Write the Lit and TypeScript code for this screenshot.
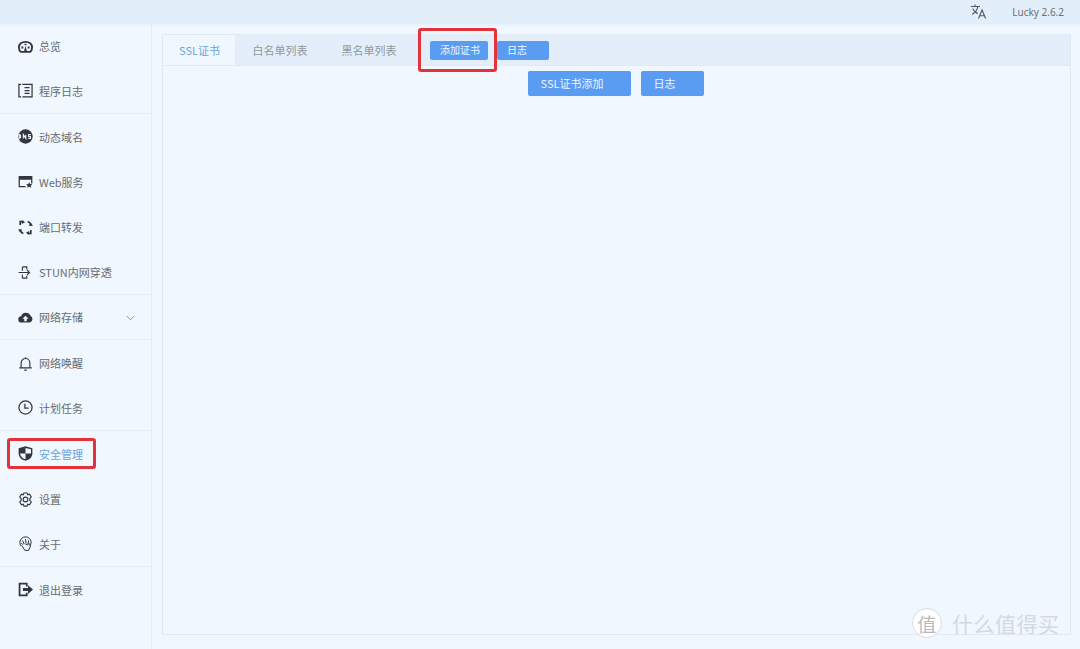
import { LitElement, html, css, svg } from 'lit';
import { customElement } from 'lit/decorators.js';

// sidebar icons, all drawn in a 24x24 box
const icons: Record<string, unknown> = {
  gauge: svg`<path fill="none" stroke="currentColor" stroke-width="3" d="M4.500 20.500h15c2-1.500 3-4 3-7 0-5.500-4.500-9-10.500-9S1.500 8 1.500 13.500c0 3 1 5.500 3 7z"/><path fill="currentColor" d="M9.500 20l2.500-9 2.500 9zM5.500 12h3v3h-3zM15.500 12h3v3h-3zM10.500 7.500h3V10h-3z"/>`,
  log: svg`<path fill="none" stroke="currentColor" stroke-width="2" d="M5 2H1.500v20H5M7 2h15.500v20H7M10.500 7.500h8M10.500 12h8M10.500 16.500h8"/>`,
  dns: svg`<circle cx="12" cy="12" r="11.500" fill="currentColor"/><path stroke="#f0f7ff" stroke-width="1.700" fill="none" d="M2 9c3 0 3 6 0 6zM8.500 15V9l4 6V9M20.500 9h-3.500v3h3v3h-3.500"/>`,
  web: svg`<path fill="currentColor" fill-rule="evenodd" d="M1 3h22v12h-2V9H3v10h9v2H1z"/><path fill="currentColor" d="M18 13l1.500 3 3.500.5-2.500 2.300.6 3.200-3.100-1.600-3.100 1.600.6-3.200-2.500-2.300 3.500-.5z"/>`,
  port: svg`<path fill="none" stroke="currentColor" stroke-width="2.600" d="M9 2.500H3.500V8M15 21.500h5.500V16M21 9c-.5-3-2-5.500-5.500-6.500M3 15c.5 3 2 5.500 5.500 6.500"/><path fill="currentColor" d="M6 .5l5.500 3-5.500 3zM18 23.500l-5.500-3 5.500-3zM0 15l3.500 4.500L7 15zM17 9l3.500-4.500L24 9z"/>`,
  stun: svg`<path fill="none" stroke="currentColor" stroke-width="1.800" d="M1 12h17M14.500 8l4 4-4 4M7 3h7v4M7 21h7v-4M7 3v6M7 15v6"/>`,
  cloud: svg`<path fill="currentColor" fill-rule="evenodd" d="M6 20a5 5 0 01-1-10 8 8 0 0115-1 6 6 0 01-1 11zm6-11l-5 5h3v4h4v-4h3z"/>`,
  bell: svg`<path fill="none" stroke="currentColor" stroke-width="1.800" d="M2 19h20M5 19v-8a7 7 0 0114 0v8M10 22.500h4M12 2v2"/>`,
  clock: svg`<circle cx="12" cy="12" r="10.500" fill="none" stroke="currentColor" stroke-width="2"/><path fill="none" stroke="currentColor" stroke-width="2" d="M11 6v7h6"/>`,
  shield: svg`<path fill="currentColor" d="M12 .5l11 3V12c0 6-5 10.500-11 11.500C6 22.500 1 18 1 12V3.500z"/><path fill="#f0f7ff" d="M12 3v9h8.800V5.200zM12 12v9.200C7.500 20 3.800 17 3.200 12z"/>`,
  gear: svg`<path fill="none" stroke="currentColor" stroke-width="1.800" d="M9.500 1.500h5l1 3 3-1 2.700 4.500-2.200 2.500v3l2.200 2.500-2.700 4.500-3-1-1 3h-5l-1-3-3 1L2.800 16 5 13.500v-3L2.800 8l2.700-4.500 3 1z"/><circle cx="12" cy="12" r="3.800" fill="none" stroke="currentColor" stroke-width="1.800"/>`,
  about: svg`<path fill="none" stroke="currentColor" stroke-width="1.600" d="M5 16a9 9 0 1114 0M8 14l-3-3M10 13L7 7M13 12l-1-7M16 13l1-6M6 15l5 8h6l3-7-2-4-3 2-3-1"/>`,
  logout: svg`<path fill="none" stroke="currentColor" stroke-width="2.800" d="M14 7V2.500H2.500v19H14V17"/><path fill="currentColor" d="M8 9.500h8V5l8 7-8 7v-4.500H8z"/>`,
};

const menu = [
  { label: '总览', icon: 'gauge' },
  { label: '程序日志', icon: 'log', divider: true },
  { label: '动态域名', icon: 'dns' },
  { label: 'Web服务', icon: 'web' },
  { label: '端口转发', icon: 'port' },
  { label: 'STUN内网穿透', icon: 'stun', divider: true },
  { label: '网络存储', icon: 'cloud', divider: true, arrow: true },
  { label: '网络唤醒', icon: 'bell' },
  { label: '计划任务', icon: 'clock', divider: true },
  { label: '安全管理', icon: 'shield', active: true },
  { label: '设置', icon: 'gear' },
  { label: '关于', icon: 'about', divider: true },
  { label: '退出登录', icon: 'logout' },
];

@customElement('app-root')
export class AppRoot extends LitElement {
  static styles = css`
    :host {
      display: block;
      position: relative;
      width: 1080px;
      height: 649px;
      overflow: hidden;
      background: #f0f7ff;
      color: #686c71;
      font-family: 'Noto Sans CJK SC', 'Noto Sans', sans-serif;
      font-size: 11px;
    }
    .top {
      height: 23px;
      display: flex;
      align-items: center;
      justify-content: flex-end;
      padding-right: 16px;
      background: #e3eefb;
      box-shadow: 0 1px 3px rgba(200, 215, 235, 0.5);
      font-family: 'Noto Sans', sans-serif;
      font-size: 10px;
      color: #6b7076;
    }
    .top svg {
      width: 17px;
      height: 17px;
      margin-right: 25px;
      color: #55595e;
    }
    .body {
      display: flex;
      height: 626px;
    }
    .side {
      width: 151px;
      flex: none;
      padding-top: 0.400px;
      border-right: 1px solid #e3ebf5;
      box-sizing: content-box;
    }
    .item {
      height: 45.300px;
      box-sizing: border-box;
      display: flex;
      align-items: center;
      padding-left: 18px;
      gap: 6px;
    }
    .item.line {
      border-bottom: 1px solid #e4ecf5;
    }
    .item svg.ic {
      width: 15px;
      height: 15px;
      color: #33373c;
      flex: none;
    }
    .item.on {
      color: #6ba3dc;
    }
    .arrow {
      width: 9px;
      height: 9px;
      margin-left: auto;
      margin-right: 16px;
      color: #777;
    }
    .main {
      flex: 1;
      padding: 11px 9px 14px 10px;
      min-width: 0;
    }
    .panel {
      height: 100%;
      box-sizing: border-box;
      border: 1px solid #e1e9f3;
      display: flex;
      flex-direction: column;
    }
    .tabs {
      height: 31px;
      flex: none;
      display: flex;
      align-items: center;
      background: #e3eefa;
      border-bottom: 1px solid #e1e9f3;
      box-sizing: border-box;
    }
    .tab {
      height: 100%;
      display: flex;
      align-items: center;
      padding-bottom: 1px;
      color: #92989f;
      margin-right: 1px;
      white-space: nowrap;
      box-sizing: border-box;
    }
    .tab.on {
      background: #f0f7ff;
      color: #69a5dc;
      width: 72px;
      padding-left: 16px;
    }
    .tab.plain {
      width: 88px;
      justify-content: center;
    }
    .btn {
      background: #5a9cf2;
      color: #eef5ff;
      border-radius: 2px;
      display: flex;
      align-items: center;
      box-sizing: border-box;
      white-space: nowrap;
      padding-bottom: 2px;
    }
    .btn.small {
      height: 19px;
      padding-left: 10px;
      font-size: 10px;
    }
    .btn.add {
      width: 58px;
    }
    .btn.log {
      width: 52px;
    }
    .tab-btns {
      display: flex;
      gap: 9px;
      margin-left: 16px;
    }
    .content {
      display: flex;
      justify-content: center;
      gap: 10px;
      padding-top: 5px;
      padding-right: 2px;
    }
    .btn.big {
      height: 25px;
      padding-left: 13px;
    }
    .btn.ssl {
      width: 103px;
    }
    .btn.logs {
      width: 63px;
    }
    .mark {
      position: absolute;
      border: 3px solid #e2333a;
      border-radius: 3px;
      box-sizing: border-box;
    }
    .mark.menu {
      left: 7px;
      top: 438px;
      width: 89px;
      height: 31px;
    }
    .mark.tools {
      left: 418px;
      top: 28px;
      width: 79px;
      height: 44px;
    }
    .watermark {
      position: absolute;
      left: 912px;
      bottom: 11px;
      display: flex;
      align-items: center;
      gap: 10px;
      color: #d4d9de;
      font-size: 21px;
      letter-spacing: 0.500px;
    }
    .wm-logo {
      width: 30px;
      height: 30px;
      border-radius: 50%;
      background: #fff;
      border: 1px solid #d9dde2;
      box-sizing: border-box;
      display: flex;
      align-items: center;
      justify-content: center;
      color: #b5b9be;
      font-size: 19px;
    }
  `;

  render() {
    return html`
      <div class="top">
        <svg viewBox="0 0 24 24" fill="none" stroke="currentColor" stroke-width="1.600">
          <path d="M1 5h13M7 2v3M11 5c-1 5-4 9-8 11M4 8c1 3 4 6 7 7" />
          <path d="M12 22l5-12 5 12M14 18h6" />
        </svg>
        Lucky 2.6.2
      </div>
      <div class="body">
        <aside class="side">
          ${menu.map(
            (m) => html`
              <div class="item ${m.divider ? 'line' : ''} ${m.active ? 'on' : ''}">
                <svg class="ic" viewBox="0 0 24 24">${icons[m.icon]}</svg>
                <span>${m.label}</span>
                ${m.arrow
                  ? html`<svg class="arrow" viewBox="0 0 12 12" fill="none" stroke="currentColor" stroke-width="1">
                      <path d="M1 4l5 5 5-5" />
                    </svg>`
                  : ''}
              </div>
            `
          )}
        </aside>
        <main class="main">
          <div class="panel">
            <div class="tabs">
              <div class="tab on">SSL证书</div>
              <div class="tab plain">白名单列表</div>
              <div class="tab plain">黑名单列表</div>
              <div class="tab-btns">
                <div class="btn small add">添加证书</div>
                <div class="btn small log">日志</div>
              </div>
            </div>
            <div class="content">
              <div class="btn big ssl">SSL证书添加</div>
              <div class="btn big logs">日志</div>
            </div>
          </div>
        </main>
      </div>
      <div class="mark menu"></div>
      <div class="mark tools"></div>
      <div class="watermark">
        <div class="wm-logo">值</div>
        <span>什么值得买</span>
      </div>
    `;
  }
}
